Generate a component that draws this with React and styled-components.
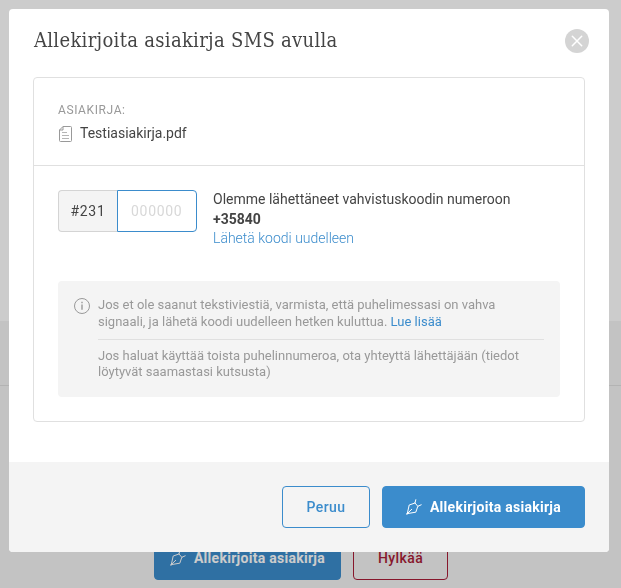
import React, { useState } from "react";
import styled, { createGlobalStyle } from "styled-components";

const GlobalStyle = createGlobalStyle`
  * {
    box-sizing: border-box;
  }
  body {
    margin: 0;
    overflow: hidden;
    font-family: Roboto, "Liberation Sans", sans-serif;
    font-size: 14px;
    color: #444;
  }
`;

const Page = styled.div`
  display: flex;
  flex-direction: column;
  height: 588px;
  background-color: #f4f4f4;
`;

const PageTop = styled.div`
  height: 321px;
  background-color: #fff;
`;

const PageBar = styled.div`
  height: 65px;
  border-bottom: 1px solid #e0e0e0;
`;

const PageActions = styled.div`
  display: flex;
  justify-content: center;
  gap: 12px;
  padding: 151px 19px 0 0;

  button {
    height: 43px;
    padding-bottom: 1px;
  }
`;

const Overlay = styled.div`
  position: fixed;
  inset: 0;
  padding: 9px 12px 36px 9px;
  background-color: rgba(0, 0, 0, 0.2);
`;

const Modal = styled.div`
  display: flex;
  flex-direction: column;
  height: 543px;
  border-radius: 4px;
  background-color: #fff;
  overflow: hidden;
`;

const Header = styled.div`
  display: flex;
  justify-content: space-between;
  align-items: center;
  height: 64px;
  padding: 0 20px 0 25px;
`;

const Title = styled.h1`
  margin: 0 0 3px;
  font-family: "Roboto Slab", "DejaVu Serif Condensed", "DejaVu Serif", serif;
  font-stretch: condensed;
  font-size: 20px;
  font-weight: 400;
  line-height: 28px;
  letter-spacing: 0.31px;
  white-space: nowrap;
`;

const CloseButton = styled.button`
  display: flex;
  width: 24px;
  height: 24px;
  padding: 0;
  border: none;
  border-radius: 50%;
  background-color: #d4d4d4;
`;

const Card = styled.div`
  height: 345px;
  margin: 4px 24px 0;
  border: 1px solid #e0e0e0;
  border-radius: 4px;
`;

const DocumentSection = styled.div`
  height: 88px;
  padding: 24px 24px 0;
  border-bottom: 1px solid #e0e0e0;
`;

const Label = styled.div`
  font-size: 12px;
  line-height: 16px;
  letter-spacing: 0.6px;
  color: #999;
`;

const FileName = styled.div`
  display: flex;
  align-items: center;
  gap: 7px;
  margin-top: 5px;
  line-height: 20px;

  svg {
    margin-top: 2px;
  }
`;

const CodeSection = styled.div`
  padding: 24px 24px 0;
`;

const CodeRow = styled.div`
  display: flex;
  gap: 16px;
`;

const CodeField = styled.div`
  display: flex;
  height: 42px;
`;

const Prefix = styled.span`
  width: 59px;
  border: 1px solid #d4d4d4;
  border-right: none;
  border-radius: 4px 0 0 4px;
  background-color: #f4f4f4;
  line-height: 40px;
  text-align: center;
  letter-spacing: 0.7px;
`;

const CodeInput = styled.input`
  width: 80px;
  padding: 0 0 0 13px;
  border: 1px solid #3b8ccc;
  border-radius: 0 4px 4px 0;
  outline: none;
  font: inherit;
  letter-spacing: 0.7px;

  &::placeholder {
    color: #d8d8d8;
  }
`;

const CodeText = styled.div`
  line-height: 19.6px;
`;

const ResendLink = styled.a`
  display: block;
  font-weight: 300;
  color: #3b8ccc;
`;

const Notice = styled.div`
  display: flex;
  gap: 8px;
  height: 116px;
  margin-top: 32px;
  padding: 16px;
  border-radius: 4px;
  background-color: #f4f4f4;
  color: #999;
  font-size: 13px;
  line-height: 16.9px;

  svg {
    flex: none;
    margin-top: 1px;
  }
`;

const NoticeBody = styled.div`
  flex: 1;
`;

const Paragraph = styled.p`
  margin: 0;

  & + & {
    margin-top: 8px;
    padding-top: 8px;
    border-top: 1px solid #e0e0e0;
    line-height: 16.5px;
  }
`;

const MoreLink = styled.a`
  color: #3b8ccc;
`;

const Footer = styled.div`
  display: flex;
  justify-content: flex-end;
  gap: 12px;
  height: 90px;
  margin-top: auto;
  padding: 24px;
  background-color: #f4f4f4;
`;

const Button = styled.button`
  display: flex;
  align-items: center;
  justify-content: center;
  gap: 8px;
  width: ${(props) => props.$width}px;
  height: 42px;
  padding: 0;
  border: 1px solid ${(props) => props.$color};
  border-radius: 4px;
  background-color: ${(props) => (props.$primary ? props.$color : "transparent")};
  color: ${(props) => (props.$primary ? "#fff" : props.$color)};
  font-family: inherit;
  font-size: 14px;
  font-weight: ${(props) => (props.$primary ? 700 : 500)};
  letter-spacing: ${(props) => (props.$primary ? 0.28 : 0.4)}px;
  white-space: nowrap;
`;

const PenIcon = () => (
  <svg width="16" height="16" viewBox="0 0 16 16" fill="none" stroke="currentColor" strokeLinecap="round" strokeLinejoin="round">
    <path d="M9.8 .7 9 4 3.2 6 1.3 14.6 9.8 13.2 11.8 7.3 15.2 5.8M9 4 11.8 7.3M1.3 14.6 5.7 10.3" />
    <path strokeWidth="1.4" d="M.9 14.9 2 13.8" />
  </svg>
);

const FileIcon = () => (
  <svg width="15" height="16" viewBox="0 0 15 16" fill="none" stroke="#999">
    <path d="M5 .5h7.5a1 1 0 0 1 1 1v13a1 1 0 0 1-1 1h-10a1 1 0 0 1-1-1V4L5 .5V4H1.5" />
    <path stroke="#b5b5b5" d="M4 6.5h5M4 9.5h7M4 12.5h7" />
  </svg>
);

const InfoIcon = () => (
  <svg width="16" height="16" viewBox="0 0 16 16" fill="none" stroke="#999">
    <circle cx="8" cy="8" r="7.5" />
    <path strokeWidth="1.4" d="M8 6.5v5.3M8 3.8v1.4" />
  </svg>
);

const CloseIcon = () => (
  <svg width="24" height="24" viewBox="0 0 24 24" stroke="#fff" strokeWidth="1.5" strokeLinecap="round">
    <path d="m7.3 7.3 9.4 9.4M16.7 7.3l-9.4 9.4" />
  </svg>
);

const App = () => {
  const [code, setCode] = useState("");

  return (
    <>
      <GlobalStyle />
      <Page>
        <PageTop />
        <PageBar />
        <PageActions>
          <Button $primary $color="#3b8ccc" $width={187}>
            <PenIcon />
            Allekirjoita asiakirja
          </Button>
          <Button $color="#a91d38" $width={95}>Hylkää</Button>
        </PageActions>
      </Page>

      <Overlay>
        <Modal>
          <Header>
            <Title>Allekirjoita asiakirja SMS avulla</Title>
            <CloseButton>
              <CloseIcon />
            </CloseButton>
          </Header>

          <Card>
            <DocumentSection>
              <Label>ASIAKIRJA:</Label>
              <FileName>
                <FileIcon />
                Testiasiakirja.pdf
              </FileName>
            </DocumentSection>

            <CodeSection>
              <CodeRow>
                <CodeField>
                  <Prefix>#231</Prefix>
                  <CodeInput
                    placeholder="000000"
                    value={code}
                    onChange={(e) => setCode(e.target.value)}
                  />
                </CodeField>
                <CodeText>
                  Olemme lähettäneet vahvistuskoodin numeroon
                  <br />
                  <b>+35840</b>
                  <ResendLink>Lähetä koodi uudelleen</ResendLink>
                </CodeText>
              </CodeRow>

              <Notice>
                <InfoIcon />
                <NoticeBody>
                  <Paragraph>
                    Jos et ole saanut tekstiviestiä, varmista, että puhelimessasi on vahva signaali,
                    ja lähetä koodi uudelleen hetken kuluttua. <MoreLink>Lue lisää</MoreLink>
                  </Paragraph>
                  <Paragraph>
                    Jos haluat käyttää toista puhelinnumeroa, ota yhteyttä lähettäjään (tiedot
                    löytyvät saamastasi kutsusta)
                  </Paragraph>
                </NoticeBody>
              </Notice>
            </CodeSection>
          </Card>

          <Footer>
            <Button $color="#3b8ccc" $width={88}>Peruu</Button>
            <Button $primary $color="#3b8ccc" $width={203}>
              <PenIcon />
              Allekirjoita asiakirja
            </Button>
          </Footer>
        </Modal>
      </Overlay>
    </>
  );
};

export default App;
